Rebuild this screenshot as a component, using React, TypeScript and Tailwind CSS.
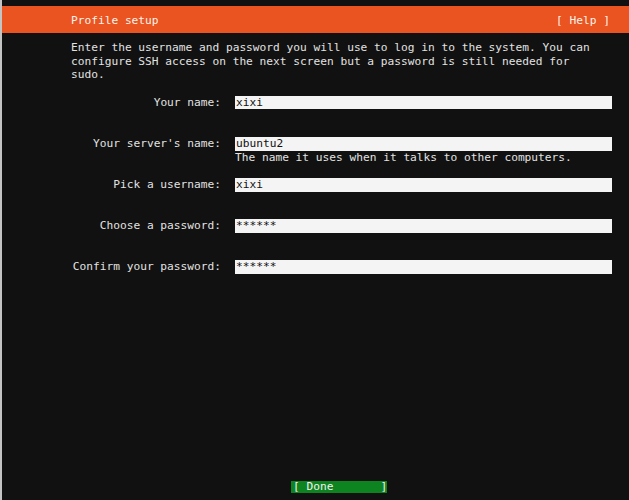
import React from "react";

const mono = "font-['DejaVu_Sans_Mono','Liberation_Mono',monospace]";

function Field({
  label,
  value,
  hint,
  className = "",
}: {
  label: string;
  value: string;
  hint?: string;
  className?: string;
}) {
  return (
    <div className={className}>
      <div className="flex h-[13.7px]">
        <div className="w-[150px] shrink-0 text-right">{label}</div>
        <div className="ml-[14px] flex-1 bg-[#f4f4f4] pl-[1px] text-[#111]">{value}</div>
      </div>
      {hint && (
        <div className="flex h-[13.7px]">
          <div className="w-[150px] shrink-0" />
          <div className="ml-[14px] flex-1">{hint}</div>
        </div>
      )}
    </div>
  );
}

export default function App() {
  return (
    <div
      className={`${mono} flex h-[500px] w-[629px] flex-col overflow-hidden border-l-2 border-[#c4c4c4] bg-[#111111] text-[11.2px] leading-[13.7px] text-[#e2e2e2]`}
    >
      <div className="h-[6px] shrink-0" />

      {/* Header */}
      <div className="flex h-[27px] shrink-0 items-center justify-between bg-[#e95420] pl-[69px] pr-[19px] pt-[2px] text-[#fff3ec]">
        <span>Profile setup</span>
        <span className="whitespace-pre">[ Help ]</span>
      </div>

      {/* Body */}
      <div className="flex flex-1 flex-col pl-[69px] pr-[17px] pt-[8px]">
        <p className="whitespace-pre">
          Enter the username and password you will use to log in to the system. You can
          <br />
          configure SSH access on the next screen but a password is still needed for
          <br />
          sudo.
        </p>

        <Field className="mt-[13.7px]" label="Your name:" value="xixi" />
        <Field
          className="mt-[27.4px]"
          label="Your server's name:"
          value="ubuntu2"
          hint="The name it uses when it talks to other computers."
        />
        <Field className="mt-[13.7px]" label="Pick a username:" value="xixi" />
        <Field className="mt-[27.4px]" label="Choose a password:" value="******" />
        <Field className="mt-[27.4px]" label="Confirm your password:" value="******" />

        <div className="mt-auto flex pb-[7px] pl-[220px]">
          <div className="flex h-[12px] items-center whitespace-pre bg-[#0e8420] pl-[2px] text-[#f2f2f2]">
            {"[ Done       ]"}
          </div>
        </div>
      </div>
    </div>
  );
}
